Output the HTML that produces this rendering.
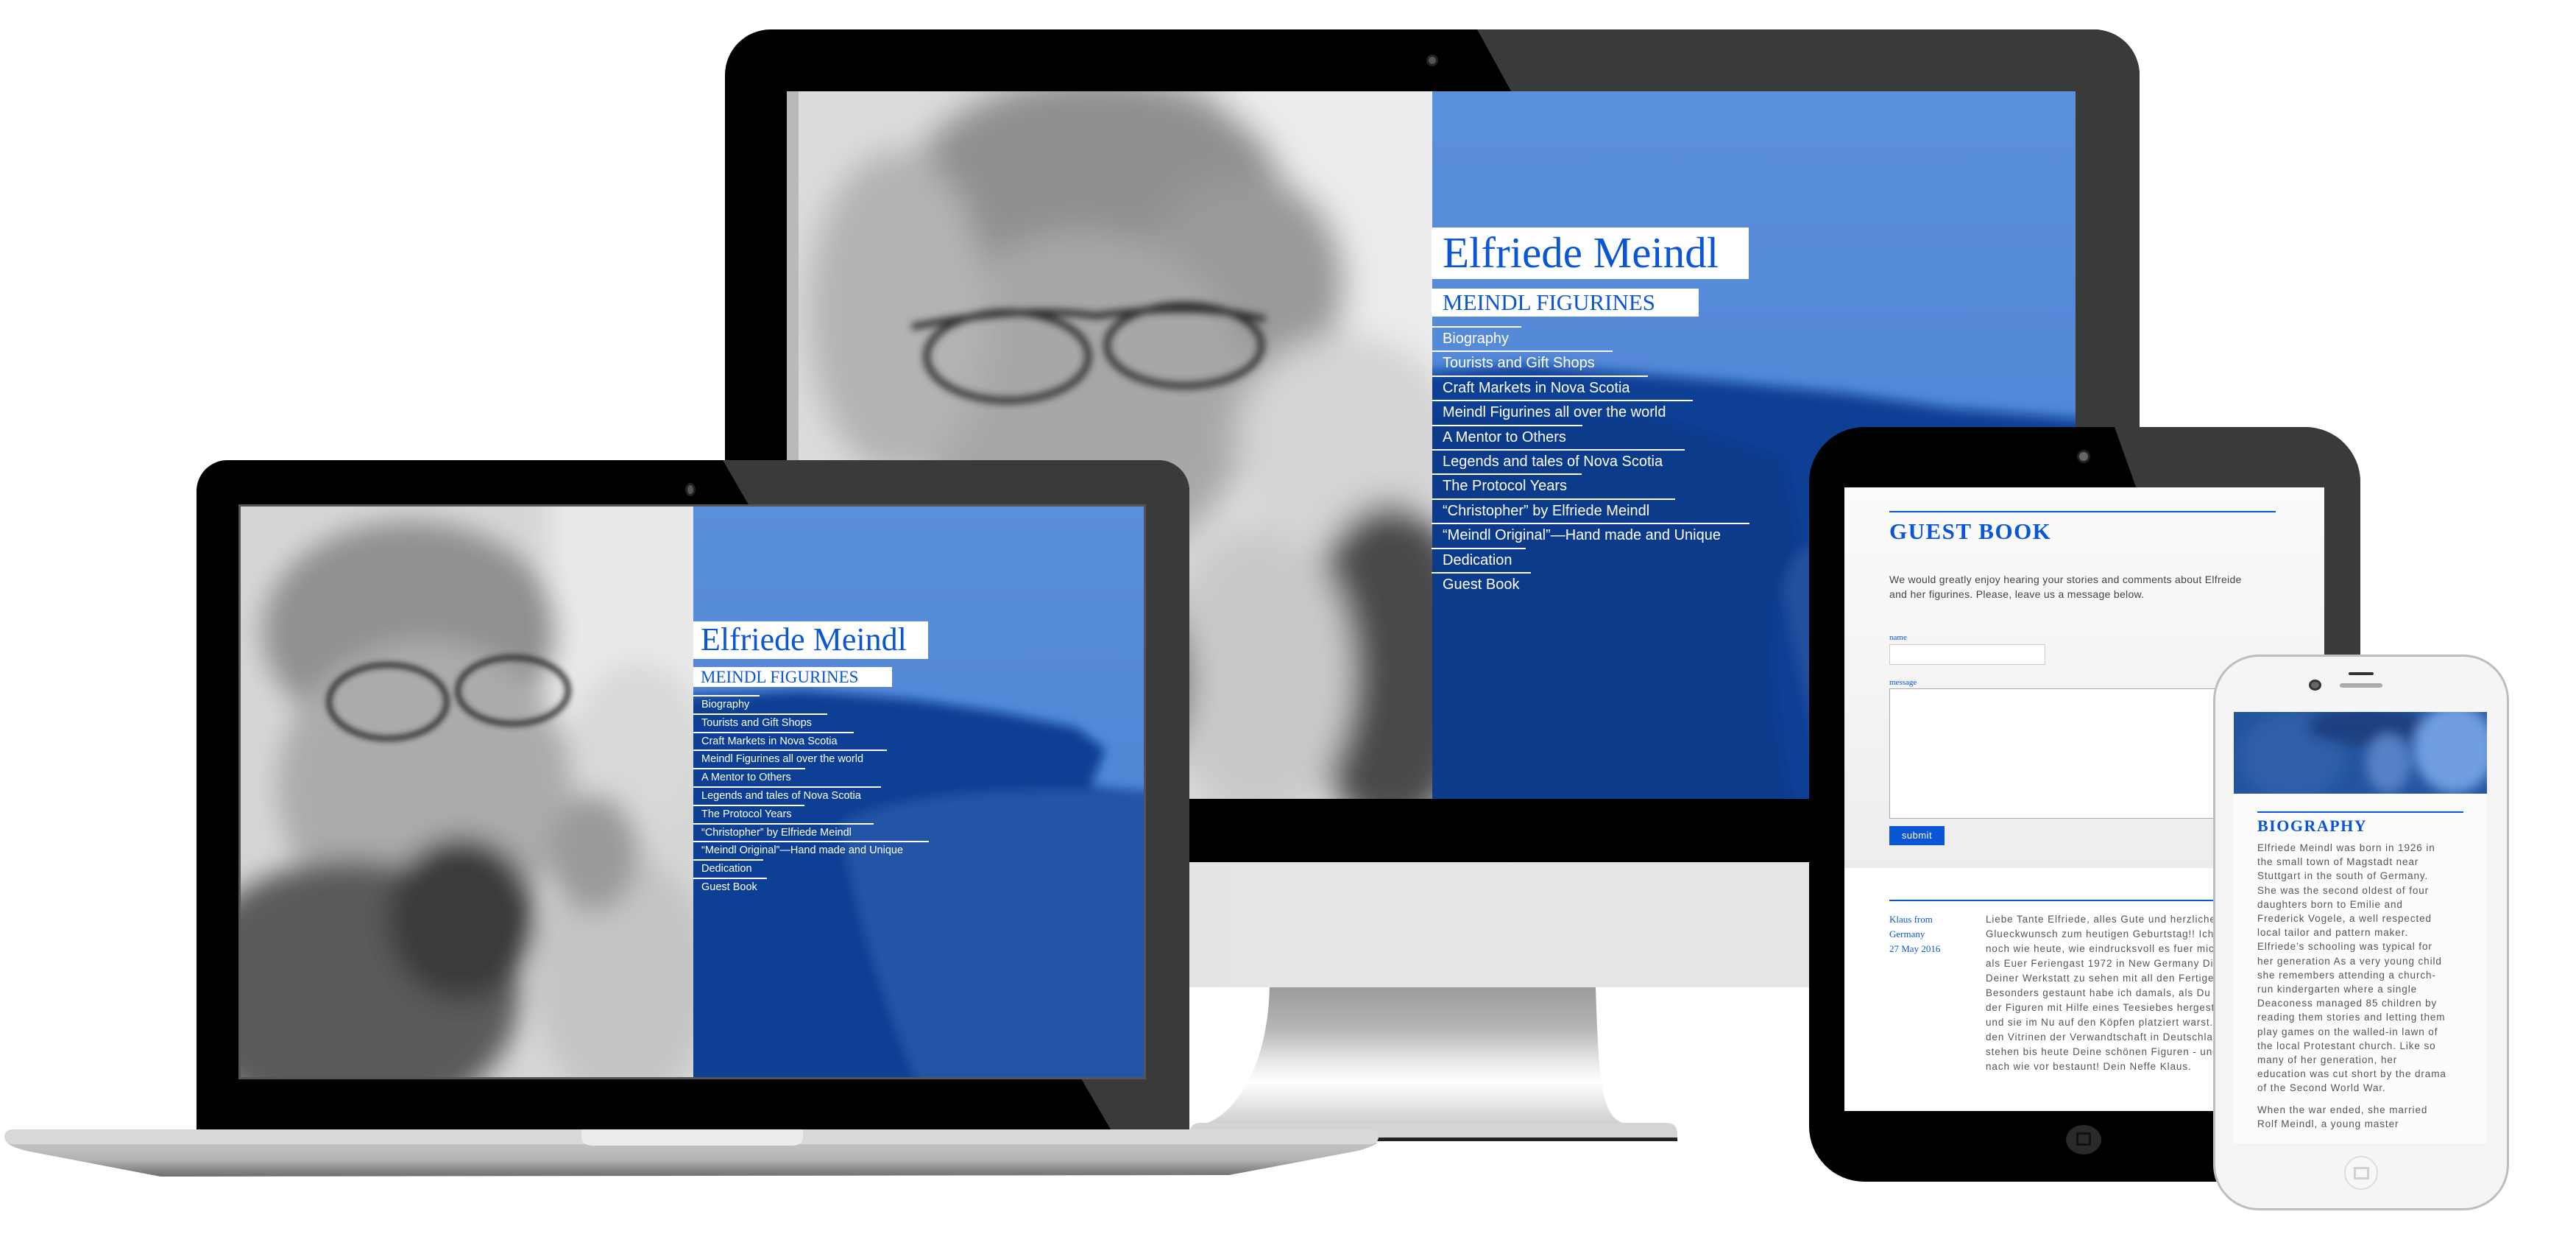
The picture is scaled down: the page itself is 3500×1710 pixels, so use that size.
<!DOCTYPE html>
<html><head><meta charset="utf-8">
<style>
*{margin:0;padding:0;box-sizing:border-box}
body{width:3500px;height:1710px;background:#fff;position:relative;overflow:hidden;font-family:"Liberation Sans",sans-serif}
.a{position:absolute}
.serif{font-family:"Liberation Serif",serif}
.nav div{border-top:2px solid #fff;color:#fff;white-space:nowrap}
</style></head><body>

<!-- ============ MONITOR ============ -->
<div class="a" style="left:985px;top:40px;width:1922px;height:1131px;background:#000;border-radius:62px 62px 0 0;overflow:hidden">
  <div class="a" style="left:0;top:0;width:1922px;height:1131px;background:#3a3a3a;clip-path:polygon(1022px 0,1922px 0,1922px 1131px,1644px 1131px)"></div>
</div>
<div class="a" style="left:1938px;top:74px;width:16px;height:16px;border-radius:50%;background:#555;border:3px solid #222"></div>
<div class="a" style="left:985px;top:1171px;width:1922px;height:170px;background:linear-gradient(90deg,#dadada,#e6e6e6 40%,#e4e4e4)"></div>
<!-- stand -->
<svg class="a" style="left:1600px;top:1341px" width="700" height="215" viewBox="0 0 700 215">
 <defs><linearGradient id="st" x1="0" y1="0" x2="0" y2="1">
  <stop offset="0" stop-color="#9d9b9c"/><stop offset="0.3" stop-color="#b5b5b5"/><stop offset="0.55" stop-color="#e8e8e8"/><stop offset="0.7" stop-color="#fff"/><stop offset="1" stop-color="#d0d0d0"/></linearGradient></defs>
 <path d="M125 0 H568 C572 120 575 175 605 184 H40 C70 175 122 120 125 0Z" fill="url(#st)"/>
 <path d="M32 184 H664 Q679 184 679 200 V204 H16 V200 Q16 184 32 184Z" fill="#d4d4d4"/>
 <rect x="16" y="204" width="663" height="5" fill="#222"/>
</svg>
<!-- monitor screen -->
<div class="a" style="left:1069px;top:124px;width:1751px;height:961px;overflow:hidden">
 <svg class="a" style="left:0;top:0" width="877" height="961" viewBox="0 0 877 961">
  <defs><filter id="b1" x="-50%" y="-50%" width="200%" height="200%"><feGaussianBlur stdDeviation="22"/></filter><filter id="b2"><feGaussianBlur stdDeviation="5"/></filter></defs>
  <rect width="877" height="961" fill="#dcdcdc"/>
  <g filter="url(#b1)">
   <rect x="600" y="-50" width="330" height="550" fill="#ececec"/>
   <ellipse cx="420" cy="150" rx="260" ry="170" fill="#8f8f8f"/>
   <ellipse cx="620" cy="260" rx="140" ry="150" fill="#999"/>
   <ellipse cx="400" cy="420" rx="230" ry="230" fill="#a7a7a7"/>
   <ellipse cx="150" cy="300" rx="120" ry="220" fill="#b3b3b3"/>
   <ellipse cx="760" cy="470" rx="150" ry="140" fill="#d4d4d4"/>
   <ellipse cx="820" cy="780" rx="120" ry="220" fill="#4a4a4a"/>
   <ellipse cx="640" cy="790" rx="130" ry="200" fill="#c9c9c9"/>
   <ellipse cx="300" cy="800" rx="250" ry="200" fill="#6a6a6a"/>
  </g>
  <g filter="url(#b2)" fill="none" stroke="#333" stroke-width="9">
   <path d="M170 320 Q320 290 420 305 Q560 285 650 310"/>
   <ellipse cx="300" cy="360" rx="110" ry="60"/><ellipse cx="540" cy="345" rx="105" ry="55"/>
  </g>
  <rect width="16" height="961" fill="#b9b9b9"/>
 </svg>
 <svg class="a" style="left:877px;top:0" width="874" height="961" viewBox="0 0 874 961">
  <defs><linearGradient id="sky" x1="0" y1="0" x2="0" y2="1"><stop offset="0" stop-color="#5b90de"/><stop offset="1" stop-color="#4a7ecf"/></linearGradient>
  <filter id="b3" x="-50%" y="-50%" width="200%" height="200%"><feGaussianBlur stdDeviation="8"/></filter></defs>
  <rect width="874" height="961" fill="url(#sky)"/>
  <g filter="url(#b3)">
  <path d="M-60 385 L120 372 L260 382 L420 396 L560 410 L700 430 L940 450 V1020 H-60Z" fill="#0f3f94"/>
  <path d="M470 640 Q600 560 940 560 V1020 H560 Q500 820 470 640Z" fill="#20509f"/>
  <path d="M-60 440 L300 440 L480 500 L500 620 Q430 720 500 1020 H-60Z" fill="#0b3a8b"/>
  </g>
 </svg>
 <div class="a" style="left:876px;top:185px;width:431px;height:70px;background:#fff"></div>
 <div class="a serif" style="left:891px;top:184px;font-size:59px;line-height:70px;color:#0a56d6;white-space:nowrap">Elfriede Meindl</div>
 <div class="a" style="left:876px;top:268px;width:363px;height:38px;background:#fff"></div>
 <div class="a serif" style="left:891px;top:266px;font-size:31px;line-height:42px;color:#0a56d6;white-space:nowrap">MEINDL FIGURINES</div>
 <div class="a nav" style="left:876px;top:319px;font-size:20px;line-height:31.4px">
  <div style="width:122px;padding-left:15px">Biography</div>
  <div style="width:246px;padding-left:15px">Tourists and Gift Shops</div>
  <div style="width:294px;padding-left:15px">Craft Markets in Nova Scotia</div>
  <div style="width:355px;padding-left:15px">Meindl Figurines all over the world</div>
  <div style="width:205px;padding-left:15px">A Mentor to Others</div>
  <div style="width:344px;padding-left:15px">Legends and tales of Nova Scotia</div>
  <div style="width:204px;padding-left:15px">The Protocol Years</div>
  <div style="width:331px;padding-left:15px">“Christopher” by Elfriede Meindl</div>
  <div style="width:432px;padding-left:15px">“Meindl Original”—Hand made and Unique</div>
  <div style="width:128px;padding-left:15px">Dedication</div>
  <div style="width:135px;padding-left:15px">Guest Book</div>
 </div>
</div>

<!-- ============ LAPTOP ============ -->
<div class="a" style="left:267px;top:625px;width:1349px;height:909px;background:#000;border-radius:42px 42px 0 0;overflow:hidden">
 <div class="a" style="left:0;top:0;width:1349px;height:909px;background:#3a3a3a;clip-path:polygon(715px 0,1349px 0,1349px 909px,1242px 909px)"></div>
</div>
<div class="a" style="left:931px;top:656px;width:14px;height:18px;border-radius:50%;background:#555;border:3px solid #222"></div>
<div class="a" style="left:324px;top:685px;width:1233px;height:781px;background:#555"></div>
<div class="a" style="left:327px;top:688px;width:1227px;height:775px;overflow:hidden">
 <svg class="a" style="left:0;top:0" width="615" height="775" viewBox="0 0 615 775">
  <defs><filter id="c1" x="-50%" y="-50%" width="200%" height="200%"><feGaussianBlur stdDeviation="18"/></filter><filter id="c2"><feGaussianBlur stdDeviation="4"/></filter></defs>
  <rect width="615" height="775" fill="#d6d6d6"/>
  <g filter="url(#c1)">
   <rect x="420" y="-40" width="240" height="340" fill="#e9e9e9"/>
   <ellipse cx="230" cy="170" rx="200" ry="150" fill="#909090"/>
   <ellipse cx="250" cy="380" rx="200" ry="200" fill="#ababab"/>
   <ellipse cx="540" cy="320" rx="90" ry="110" fill="#d9d9d9"/>
   <ellipse cx="150" cy="660" rx="230" ry="180" fill="#5a5a5a"/>
   <ellipse cx="300" cy="560" rx="100" ry="110" fill="#3a3a3a"/>
   <ellipse cx="520" cy="640" rx="120" ry="170" fill="#c4c4c4"/>
   <ellipse cx="480" cy="470" rx="60" ry="80" fill="#9a9a9a"/>
  </g>
  <g filter="url(#c2)" fill="none" stroke="#2a2a2a" stroke-width="7">
   <ellipse cx="200" cy="265" rx="80" ry="50"/><ellipse cx="370" cy="250" rx="75" ry="45"/>
  </g>
 </svg>
 <svg class="a" style="left:615px;top:0" width="612" height="775" viewBox="0 0 612 775">
  <defs><linearGradient id="sky2" x1="0" y1="0" x2="0" y2="1"><stop offset="0" stop-color="#5a8fdd"/><stop offset="1" stop-color="#4a7ecf"/></linearGradient><filter id="c3" x="-50%" y="-50%" width="200%" height="200%"><feGaussianBlur stdDeviation="7"/></filter></defs>
  <rect width="612" height="775" fill="url(#sky2)"/>
  <g filter="url(#c3)">
  <path d="M-50 258 L150 250 L300 262 L420 280 L520 300 L560 330 L540 380 L660 390 V840 H-50Z" fill="#0f3f94"/>
  <path d="M200 430 Q320 370 660 390 V840 H330 Q230 620 200 430Z" fill="#2354a5"/>
  </g>
 </svg>
 <div class="a" style="left:615px;top:156px;width:319px;height:51px;background:#fff"></div>
 <div class="a serif" style="left:625px;top:155px;font-size:44px;line-height:52px;color:#0a56d6;white-space:nowrap">Elfriede Meindl</div>
 <div class="a" style="left:615px;top:218px;width:270px;height:27px;background:#fff"></div>
 <div class="a serif" style="left:625px;top:216px;font-size:23px;line-height:31px;color:#0a56d6;white-space:nowrap">MEINDL FIGURINES</div>
 <div class="a nav" style="left:615px;top:256px;font-size:14.5px;line-height:22.8px">
  <div style="width:90px;padding-left:11px">Biography</div>
  <div style="width:182px;padding-left:11px">Tourists and Gift Shops</div>
  <div style="width:218px;padding-left:11px">Craft Markets in Nova Scotia</div>
  <div style="width:263px;padding-left:11px">Meindl Figurines all over the world</div>
  <div style="width:152px;padding-left:11px">A Mentor to Others</div>
  <div style="width:255px;padding-left:11px">Legends and tales of Nova Scotia</div>
  <div style="width:151px;padding-left:11px">The Protocol Years</div>
  <div style="width:245px;padding-left:11px">“Christopher” by Elfriede Meindl</div>
  <div style="width:320px;padding-left:11px">“Meindl Original”—Hand made and Unique</div>
  <div style="width:95px;padding-left:11px">Dedication</div>
  <div style="width:100px;padding-left:11px">Guest Book</div>
 </div>
</div>
<!-- laptop base -->
<svg class="a" style="left:0;top:1530px" width="1880" height="75" viewBox="0 0 1880 75">
 <defs><linearGradient id="lb" x1="0" y1="0" x2="0" y2="1"><stop offset="0" stop-color="#c4c4c4"/><stop offset="0.5" stop-color="#b2b2b2"/><stop offset="1" stop-color="#6e6e6e"/></linearGradient></defs>
 <path d="M10 22 H1872 Q1860 30 1840 34 L1670 66 L218 68 L40 34 Q14 28 10 22Z" fill="url(#lb)"/>
 <rect x="6" y="4" width="1867" height="20" rx="10" fill="#d9d9d9"/>
 <path d="M790 4 H1091 V14 Q1091 26 1075 26 H806 Q790 26 790 14Z" fill="#ececec"/>
</svg>

<!-- ============ TABLET ============ -->
<div class="a" style="left:2458px;top:580px;width:749px;height:1025px;background:#000;border-radius:75px;overflow:hidden">
 <div class="a" style="left:0;top:0;width:749px;height:1025px;background:#3a3a3a;clip-path:polygon(415px 0,749px 0,749px 1025px,780px 1025px)"></div>
</div>
<div class="a" style="left:2822px;top:611px;width:18px;height:18px;border-radius:50%;background:#666;border:3px solid #222"></div>
<div class="a" style="left:2807px;top:1528px;width:48px;height:40px;border-radius:50%;background:#2a2a2a"></div>
<div class="a" style="left:2821px;top:1538px;width:20px;height:18px;border:3px solid #111;border-radius:2px"></div>
<div class="a" style="left:2506px;top:662px;width:652px;height:847px;background:#fff;overflow:hidden">
 <div class="a" style="left:0;top:0;width:652px;height:517px;background:linear-gradient(#fbfbfb,#ededed)"></div>
 <div class="a" style="left:61px;top:32px;width:525px;height:2px;background:#0a56d6"></div>
 <div class="a serif" style="left:61px;top:42px;font-size:31px;line-height:36px;color:#0a56d6;letter-spacing:1.5px;font-weight:bold;white-space:nowrap">GUEST BOOK</div>
 <div class="a" style="left:61px;top:115px;font-size:14px;line-height:20px;color:#444;letter-spacing:.3px;white-space:nowrap">We would greatly enjoy hearing your stories and comments about Elfreide<br>and her figurines. Please, leave us a message below.</div>
 <div class="a serif" style="left:61px;top:198px;font-size:11px;color:#0a56d6">name</div>
 <div class="a" style="left:61px;top:213px;width:212px;height:28px;background:#fff;border:1px solid #ccc"></div>
 <div class="a serif" style="left:61px;top:259px;font-size:11px;color:#0a56d6">message</div>
 <div class="a" style="left:61px;top:273px;width:525px;height:177px;background:#fff;border:1px solid #aaa"></div>
 <div class="a" style="left:61px;top:460px;width:75px;height:26px;background:#0a56d6;color:#fff;font-size:13px;line-height:26px;text-align:center;letter-spacing:.5px">submit</div>
 <div class="a" style="left:61px;top:560px;width:525px;height:2px;background:#0a56d6"></div>
 <div class="a serif" style="left:61px;top:577px;font-size:13px;line-height:20px;color:#0a56d6">Klaus from<br>Germany<br>27 May 2016</div>
 <div class="a" style="left:192px;top:577px;font-size:13.5px;line-height:20px;color:#555;letter-spacing:.9px;white-space:nowrap">Liebe Tante Elfriede, alles Gute und herzlichen<br>Glueckwunsch zum heutigen Geburtstag!! Ich weiss<br>noch wie heute, wie eindrucksvoll es fuer mich war<br>als Euer Feriengast 1972 in New Germany Dich in<br>Deiner Werkstatt zu sehen mit all den Fertigen.<br>Besonders gestaunt habe ich damals, als Du die Haare<br>der Figuren mit Hilfe eines Teesiebes hergestellt<br>und sie im Nu auf den Köpfen platziert warst. In<br>den Vitrinen der Verwandtschaft in Deutschland<br>stehen bis heute Deine schönen Figuren - und werden<br>nach wie vor bestaunt! Dein Neffe Klaus.</div>
</div>

<!-- ============ PHONE ============ -->
<div class="a" style="left:3007px;top:889px;width:402px;height:755px;background:#f5f5f5;border:3px solid #bdbdbd;border-radius:62px"></div>
<div class="a" style="left:3137px;top:923px;width:17px;height:15px;border-radius:50%;background:#666;border:3px solid #333"></div>
<div class="a" style="left:3191px;top:913px;width:34px;height:4px;background:#333;border-radius:2px"></div>
<div class="a" style="left:3179px;top:928px;width:58px;height:6px;background:#aaa;border-radius:3px"></div>
<div class="a" style="left:3185px;top:1570px;width:46px;height:46px;border-radius:50%;border:2px solid #ddd;background:#f7f7f7"></div>
<div class="a" style="left:3198px;top:1585px;width:21px;height:17px;border:3px solid #d0d0d0"></div>
<div class="a" style="left:3035px;top:967px;width:344px;height:586px;background:#fcfcfc;overflow:hidden">
 <svg class="a" style="left:0;top:0" width="344" height="111" viewBox="0 0 344 111">
  <defs><filter id="p1" x="-50%" y="-50%" width="200%" height="200%"><feGaussianBlur stdDeviation="8"/></filter></defs>
  <rect width="344" height="111" fill="#24549f"/>
  <g filter="url(#p1)">
   <ellipse cx="80" cy="60" rx="70" ry="60" fill="#2f5fa8"/>
   <ellipse cx="180" cy="20" rx="80" ry="25" fill="#1b3f80"/>
   <ellipse cx="300" cy="50" rx="55" ry="60" fill="#6f9ee0"/>
   <ellipse cx="210" cy="70" rx="30" ry="40" fill="#5681c6"/>
  </g>
 </svg>
 <div class="a" style="left:32px;top:135px;width:280px;height:2px;background:#0a56d6"></div>
 <div class="a serif" style="left:32px;top:142px;font-size:22px;line-height:26px;color:#0a56d6;letter-spacing:1.5px;font-weight:bold;white-space:nowrap">BIOGRAPHY</div>
 <div class="a" style="left:32px;top:175px;font-size:13.5px;line-height:19.2px;color:#555;letter-spacing:.9px;white-space:nowrap">Elfriede Meindl was born in 1926 in<br>the small town of Magstadt near<br>Stuttgart in the south of Germany.<br>She was the second oldest of four<br>daughters born to Emilie and<br>Frederick Vogele, a well respected<br>local tailor and pattern maker.<br>Elfriede’s schooling was typical for<br>her generation As a very young child<br>she remembers attending a church-<br>run kindergarten where a single<br>Deaconess managed 85 children by<br>reading them stories and letting them<br>play games on the walled-in lawn of<br>the local Protestant church. Like so<br>many of her generation, her<br>education was cut short by the drama<br>of the Second World War.<br><span style="display:block;height:10px"></span>When the war ended, she married<br>Rolf Meindl, a young master</div>
</div>
</body></html>
